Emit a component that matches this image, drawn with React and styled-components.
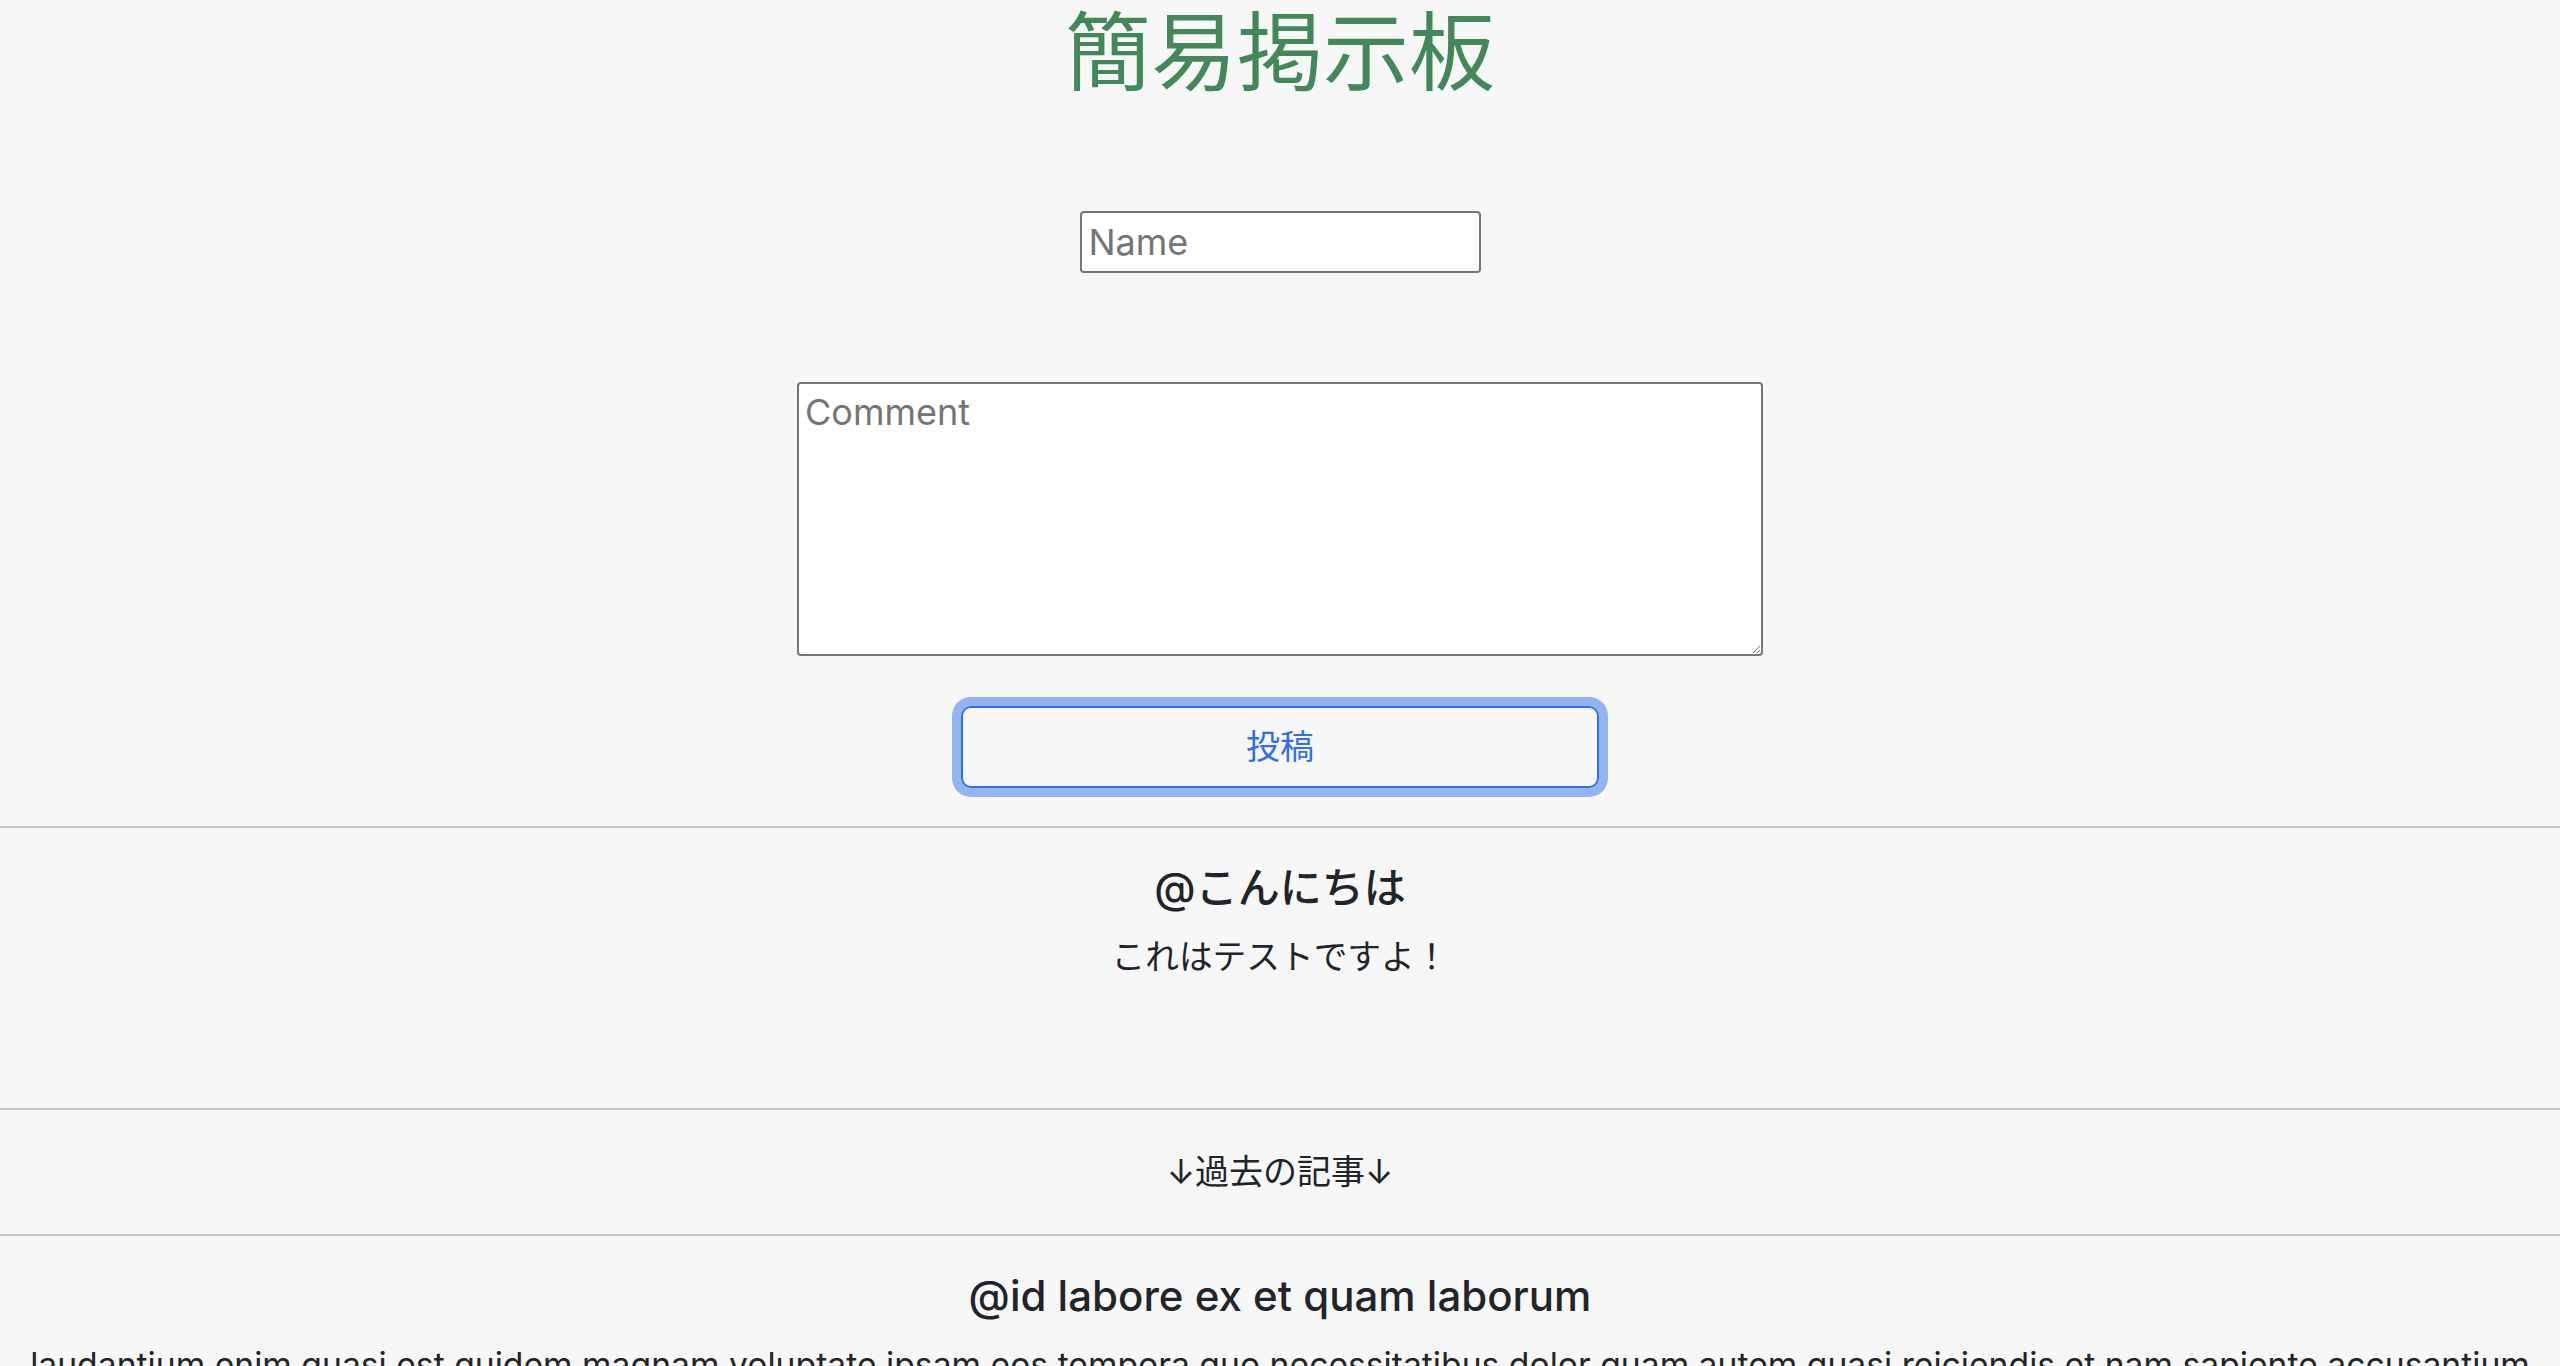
import styled, { createGlobalStyle } from "styled-components";

const GlobalStyle = createGlobalStyle`
    html, body {
        margin: 0;
        padding: 0;
        background-color: #F7F7F7;
    }

    body {
        font-family: Inter, "Noto Sans CJK JP", sans-serif;
        color: #212529;
        font-size: 34px;
        line-height: 1.5;
    }
`;

const posts = [
    { name: "こんにちは", body: "これはテストですよ！" },
];

const pastPosts = [
    {
        name: "id labore ex et quam laborum",
        body: "laudantium enim quasi est quidem magnam voluptate ipsam eos tempora quo necessitatibus dolor quam autem quasi reiciendis et nam sapiente accusantium",
    },
];

const App = () => {
    return (
        <Wrapper>
            <GlobalStyle />
            <Title>簡易掲示板</Title>

            <Form onSubmit={(e) => e.preventDefault()}>
                <NameInput type="text" placeholder="Name" />
                <CommentArea placeholder="Comment" />
                <SubmitButton type="submit">投稿</SubmitButton>
            </Form>

            <Divider />

            {posts.map((post, i) => (
                <Post key={i} $latest>
                    <PostName>@{post.name}</PostName>
                    <PostBody>{post.body}</PostBody>
                </Post>
            ))}

            <Divider />
            <PastLabel>↓過去の記事↓</PastLabel>
            <Divider />

            {pastPosts.map((post, i) => (
                <Post key={i}>
                    <PostName>@{post.name}</PostName>
                    <PostBody>{post.body}</PostBody>
                </Post>
            ))}
        </Wrapper>
    );
};

export default App;

const Wrapper = styled.div`
    display: flex;
    flex-direction: column;
    min-height: 100vh;
`;

const Title = styled.h1`
    margin: 0;
    font-family: "Noto Sans CJK JP", sans-serif;
    font-weight: 400;
    font-size: 86px;
    line-height: 94px;
    color: #43875A;
    text-align: center;
`;

const Form = styled.form`
    display: flex;
    flex-direction: column;
    align-items: center;
    padding: 117px 0 38px;
`;

const fieldBase = `
    box-sizing: border-box;
    border: 2px solid #767676;
    border-radius: 4px;
    background-color: #FFFFFF;
    font-family: Inter, "Noto Sans CJK JP", sans-serif;
    font-size: 36px;
    color: #212529;
    outline: none;

    &::placeholder {
        color: #757575;
    }
`;

const NameInput = styled.input`
    ${fieldBase}
    width: 401px;
    height: 62px;
    padding: 0 7px;
`;

const CommentArea = styled.textarea`
    ${fieldBase}
    width: 966px;
    height: 274px;
    margin-top: 109px;
    padding: 7px 6px;
    line-height: 1.2;
    resize: both;
`;

const SubmitButton = styled.button`
    box-sizing: border-box;
    width: 638px;
    height: 82px;
    margin-top: 50px;
    padding: 0 0 6px;
    border: 2px solid #2F6FED;
    border-radius: 10px;
    background-color: transparent;
    box-shadow: 0 0 0 9px rgba(47, 111, 237, 0.5);
    color: #2F6FED;
    font-family: "Noto Sans CJK JP", sans-serif;
    font-size: 34px;
    cursor: pointer;
`;

const Divider = styled.hr`
    width: 100%;
    margin: 0;
    border: 0;
    border-top: 2px solid #C4C4C4;
    opacity: 1;
`;

const Post = styled.div`
    display: flex;
    flex-direction: column;
    align-items: center;
    padding: 35px 0 ${(props) => (props.$latest ? "126px" : "40px")};
    text-align: center;
`;

const PostName = styled.h5`
    margin: 0;
    font-size: 42px;
    font-weight: 500;
    line-height: 50px;
`;

const PostBody = styled.p`
    margin: 18px 0 0;
    font-size: 33.7px;
    line-height: 51px;
    white-space: nowrap;
`;

const PastLabel = styled.p`
    margin: 0;
    padding: 36px 0 37px;
    line-height: 51px;
    text-align: center;
`;
